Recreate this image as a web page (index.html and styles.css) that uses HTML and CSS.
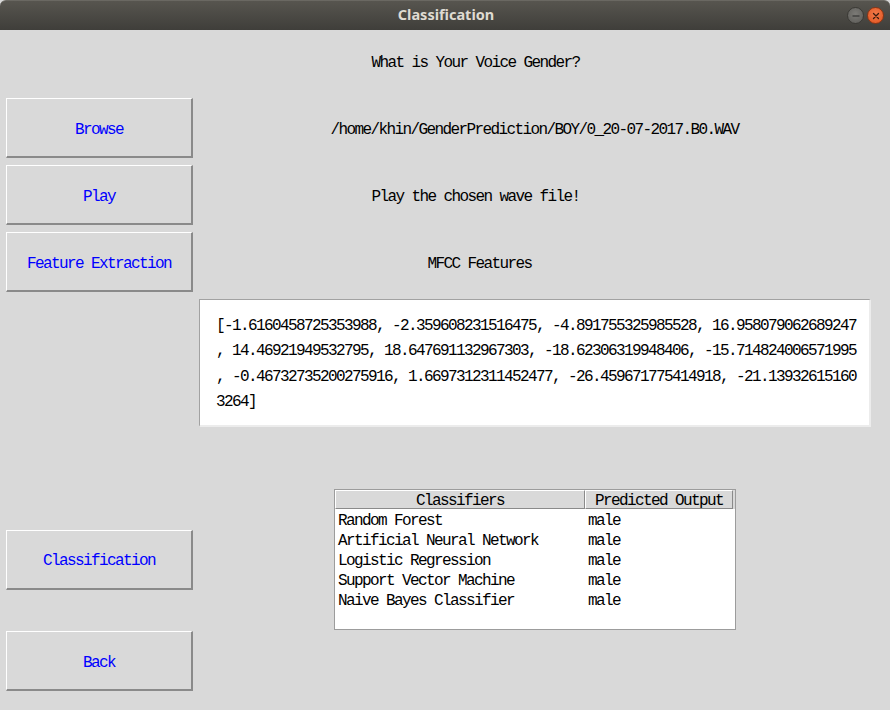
FILE: index.html
```html
<!DOCTYPE html>
<html>
<head>
<meta charset="utf-8">
<title>Classification</title>
<link rel="stylesheet" href="styles.css">
</head>
<body>
<div class="window">
  <div class="titlebar">
    <span class="title">Classification</span>
    <div class="wm-buttons">
      <span class="wm-btn wm-min"><svg width="14" height="14" viewBox="0 0 14 14"><line x1="3.5" y1="7" x2="10.5" y2="7" stroke="#3a3a38" stroke-width="1.3"/></svg></span>
      <span class="wm-btn wm-close"><svg width="14" height="14" viewBox="0 0 14 14"><path d="M4.5 4.5 L9.5 9.5 M9.5 4.5 L4.5 9.5" stroke="#3b1a0e" stroke-width="1.3" stroke-linecap="round"/></svg></span>
    </div>
  </div>
  <div class="content">
    <div class="row row-title">
      <div class="left"></div>
      <div class="right"><div class="label label-q">What is Your Voice Gender?</div></div>
    </div>
    <div class="row row-btn">
      <div class="left"><div class="btn">Browse</div></div>
      <div class="right"><div class="label label-path">/home/khin/GenderPrediction/BOY/0_20-07-2017.B0.WAV</div></div>
    </div>
    <div class="row row-btn gap">
      <div class="left"><div class="btn">Play</div></div>
      <div class="right"><div class="label label-q">Play the chosen wave file!</div></div>
    </div>
    <div class="row row-btn gap">
      <div class="left"><div class="btn">Feature Extraction</div></div>
      <div class="right"><div class="label label-mfcc">MFCC Features</div></div>
    </div>
    <div class="row row-text gap">
      <div class="left"></div>
      <div class="right">
        <div class="textbox">
          <div class="tline">[-1.6160458725353988, -2.359608231516475, -4.891755325985528, 16.958079062689247</div>
          <div class="tline">, 14.46921949532795, 18.647691132967303, -18.62306319948406, -15.714824006571995</div>
          <div class="tline">, -0.46732735200275916, 1.6697312311452477, -26.459671775414918, -21.13932615160</div>
          <div class="tline">3264]</div>
        </div>
      </div>
    </div>
    <div class="row row-class">
      <div class="left"><div class="btn">Classification</div></div>
      <div class="right">
        <div class="tree">
          <div class="tree-head">
            <div class="th th1">Classifiers</div>
            <div class="th th2">Predicted Output</div>
          </div>
          <div class="tree-body">
            <div class="tr"><div class="td td1">Random Forest</div><div class="td td2">male</div></div>
            <div class="tr"><div class="td td1">Artificial Neural Network</div><div class="td td2">male</div></div>
            <div class="tr"><div class="td td1">Logistic Regression</div><div class="td td2">male</div></div>
            <div class="tr"><div class="td td1">Support Vector Machine</div><div class="td td2">male</div></div>
            <div class="tr"><div class="td td1">Naive Bayes Classifier</div><div class="td td2">male</div></div>
          </div>
        </div>
      </div>
    </div>
    <div class="row row-back">
      <div class="left"><div class="btn">Back</div></div>
      <div class="right"></div>
    </div>
  </div>
</div>
</body>
</html>
```

FILE: styles.css
```css
* { box-sizing: border-box; }
html, body { margin: 0; padding: 0; }
body {
  width: 890px;
  height: 710px;
  overflow: hidden;
  background: #d9d9d9;
  font-family: "Liberation Mono", "Courier New", monospace;
  font-size: 16px;
  letter-spacing: -1.6px;
  color: #000;
}
.window { width: 890px; height: 710px; display: flex; flex-direction: column; }
.titlebar {
  height: 30px;
  flex: none;
  position: relative;
  display: flex;
  align-items: center;
  justify-content: center;
  background: linear-gradient(#57554f, #3f3e3a);
  border-top: 1px solid #6a6862;
  border-radius: 6px 6px 0 0;
}
.title {
  font-family: "Noto Sans", "DejaVu Sans", sans-serif;
  font-weight: bold;
  font-size: 14.5px;
  letter-spacing: 0;
  color: #dfdbd2;
  margin-left: 2px;
  margin-top: -3px;
}
.wm-buttons {
  position: absolute;
  right: 6px;
  top: 6px;
  display: flex;
  gap: 3px;
}
.wm-btn {
  width: 17px;
  height: 17px;
  border-radius: 50%;
  display: flex;
  align-items: center;
  justify-content: center;
}
.wm-min { background: radial-gradient(circle at 50% 40%, #7c7b77, #5b5a56); border: 1px solid #3a3935; }
.wm-close { background: radial-gradient(circle at 50% 40%, #f37a4a, #e0531f); border: 1px solid #8d3413; }
.content { flex: 1; display: flex; flex-direction: column; }
.row { display: flex; }
.left { width: 193px; flex: none; padding-left: 6px; display: flex; align-items: center; }
.right { flex: 1; display: flex; align-items: center; }
.row-title { height: 62px; }
.row-btn { height: 60px; margin-top: 6px; }
.row-btn.gap { margin-top: 7px; }
.row-text { height: 128px; margin-top: 7px; }
.row-class { height: 141px; margin-top: 62px; }
.row-back { height: 60px; margin-top: 1px; }
.btn {
  width: 187px;
  height: 60px;
  padding-top: 4px;
  display: flex;
  align-items: center;
  justify-content: center;
  color: #0000ff;
  background: #d9d9d9;
  border-top: 1px solid #ffffff;
  border-left: 1px solid #ffffff;
  border-right: 2px solid #8a8a8a;
  border-bottom: 2px solid #8a8a8a;
}
.label { text-align: center; line-height: 20px; padding-top: 4px; }
.label-q { width: 565px; }
.label-path { width: 683px; }
.label-mfcc { width: 573px; }
.textbox {
  margin-left: 6px;
  width: 672px;
  height: 128px;
  background: #ffffff;
  border-top: 1px solid #a2a2a2;
  border-left: 1px solid #a2a2a2;
  border-right: 2px solid #ececec;
  border-bottom: 2px solid #ececec;
  padding: 14px 0 0 16px;
}
.tline { line-height: 25.4px; height: 25.4px; white-space: pre; }
.tree {
  margin-left: 141px;
  width: 402px;
  height: 141px;
  background: #ffffff;
  border: 1px solid #9c9c9c;
  display: flex;
  flex-direction: column;
}
.tree-head { display: flex; height: 19px; background: #d9d9d9; }
.th {
  height: 19px;
  line-height: 21px;
  text-align: center;
  border-top: 1px solid #ffffff;
  border-left: 1px solid #ffffff;
  border-right: 1px solid #8a8a8a;
  border-bottom: 1px solid #8a8a8a;
  white-space: nowrap;
}
.th1 { width: 250px; }
.th2 { width: 148px; }
.tree-body { flex: 1; }
.tr { display: flex; height: 20px; line-height: 24px; }
.td { white-space: nowrap; }
.td1 { width: 250px; padding-left: 3px; }
.td2 { padding-left: 3px; }
```
